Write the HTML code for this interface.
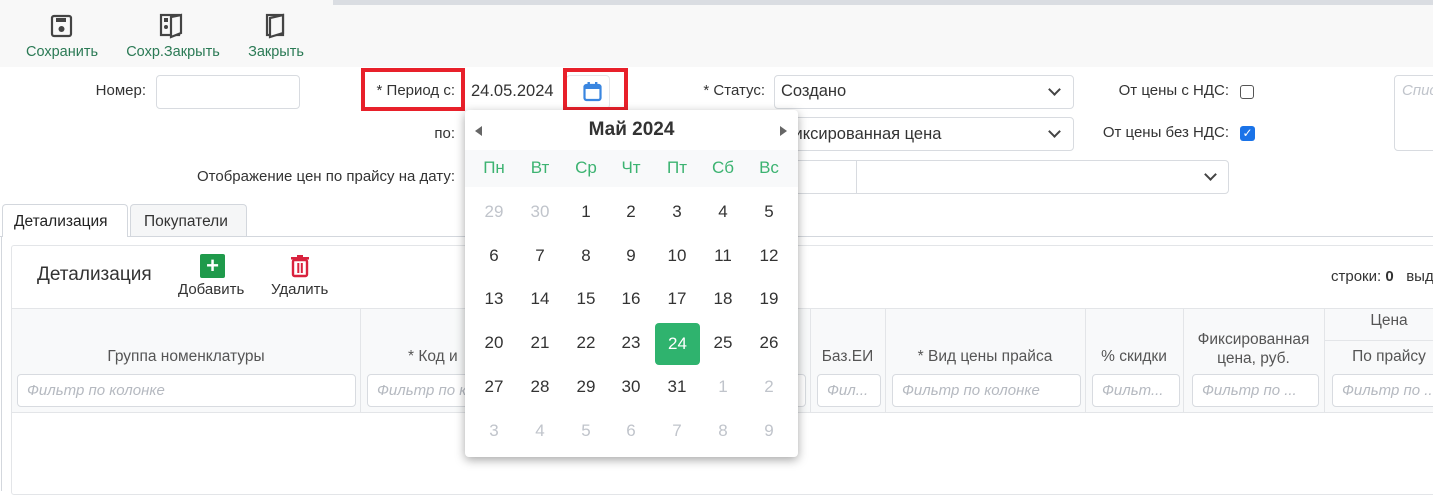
<!DOCTYPE html>
<html><head><meta charset="utf-8"><style>
*{box-sizing:border-box;margin:0;padding:0}
body{width:1433px;height:491px;overflow:hidden;background:#fff;font-family:"Liberation Sans","DejaVu Sans",sans-serif;color:#333;font-size:15px;position:relative}
.a{position:absolute}
.lbl{position:absolute;text-align:right;font-size:15px;color:#333;white-space:nowrap}
.inp{position:absolute;border:1px solid #d8dbe0;border-radius:4px;background:#fff}
.chev{position:absolute;width:9px;height:9px;border-right:2.5px solid #444;border-bottom:2.5px solid #444;transform:rotate(45deg)}
.tb{position:absolute;top:44px;font-size:14.5px;color:#2b7a55;text-align:center;white-space:nowrap}
.th{position:absolute;font-size:15.5px;color:#555;text-align:center;white-space:nowrap}
.flt{position:absolute;top:374px;height:33px;border:1px solid #d8dbe0;border-radius:4px;background:#fff;color:#b5b9c0;font-style:italic;font-size:15px;padding:7px 9px;white-space:nowrap;overflow:hidden}
.vl{position:absolute;top:308px;height:105px;width:1px;background:#e3e5e8}
.d{position:absolute;width:46px;text-align:center;font-size:17px;color:#333}
.m{color:#c0c4cb}
.red{position:absolute;border:4px solid #e8202a}
</style></head><body>
<div class="a" style="left:0;top:0;width:1433px;height:67px;background:#f8f8f8"></div>
<div class="a" style="left:333px;top:0;width:1100px;height:5px;background:#dadde2"></div>

<svg class="a" style="left:50px;top:14px" width="24" height="24" viewBox="0 0 24 24"><rect x="2" y="2" width="19" height="20" rx="2" fill="none" stroke="#444" stroke-width="2.2"/><rect x="6" y="4" width="10" height="4" fill="#444"/><circle cx="11.5" cy="15" r="3" fill="#444"/></svg>
<svg class="a" style="left:159px;top:13px" width="26" height="26" viewBox="0 0 26 26"><rect x="2" y="2" width="18" height="20" fill="none" stroke="#444" stroke-width="2.2"/><rect x="5" y="5" width="4" height="4" fill="#444"/><circle cx="7" cy="14" r="2" fill="#444"/><path d="M12 4 L22 2 L22 20 L12 24 Z" fill="#f8f8f8" stroke="#444" stroke-width="2.2"/></svg>
<svg class="a" style="left:265px;top:13px" width="22" height="26" viewBox="0 0 22 26"><rect x="2" y="2" width="16" height="20" fill="none" stroke="#444" stroke-width="2.2"/><path d="M5 5 L18 2 L18 20 L5 24 Z" fill="#f8f8f8" stroke="#444" stroke-width="2.2"/></svg>
<div class="tb" style="left:18px;width:88px">Сохранить</div>
<div class="tb" style="left:119px;width:108px">Сохр.Закрыть</div>
<div class="tb" style="left:240px;width:72px">Закрыть</div>

<div class="lbl" style="left:60px;width:86px;top:82px">Номер:</div>
<div class="inp" style="left:156px;top:75px;width:144px;height:34px"></div>
<div class="lbl" style="left:300px;width:155px;top:82px">* Период с:</div>
<div class="red" style="left:361px;top:68px;width:104px;height:43px"></div>
<div class="a" style="left:471px;top:82px;font-size:16.5px">24.05.2024</div>
<div class="inp" style="left:566px;top:75px;width:44px;height:34px;border-color:#e4e6ea"></div>
<svg class="a" style="left:583px;top:81px" width="19" height="21" viewBox="0 0 19 21"><rect x="1.5" y="4" width="16" height="15" rx="2" fill="none" stroke="#3a86e0" stroke-width="2.2"/><rect x="1.5" y="4" width="16" height="4" fill="#3a86e0"/><rect x="4.5" y="1" width="2.4" height="5" fill="#3a86e0"/><rect x="12" y="1" width="2.4" height="5" fill="#3a86e0"/></svg>
<div class="red" style="left:563px;top:68px;width:65px;height:43px"></div>
<div class="lbl" style="left:650px;width:115px;top:82px">* Статус:</div>
<div class="inp" style="left:774px;top:75px;width:300px;height:34px"></div>
<div class="a" style="left:781px;top:82px;font-size:16.5px">Создано</div>
<div class="chev" style="left:1050px;top:85px"></div>
<div class="lbl" style="left:1050px;width:179px;top:82px">От цены с НДС:</div>
<div class="a" style="left:1240px;top:85px;width:14px;height:14px;border:1.5px solid #555;border-radius:3px"></div>
<div class="inp" style="left:1394px;top:75px;width:60px;height:76px"></div>
<div class="a" style="left:1402px;top:82px;color:#c0c4cb;font-style:italic;font-size:15px">Спис</div>

<div class="lbl" style="left:400px;width:55px;top:125px">по:</div>
<div class="inp" style="left:774px;top:117px;width:300px;height:34px"></div>
<div class="a" style="left:781px;top:125px;font-size:16.5px">Фиксированная цена</div>
<div class="chev" style="left:1050px;top:127px"></div>
<div class="lbl" style="left:1050px;width:179px;top:124px">От цены без НДС:</div>
<div class="a" style="left:1240px;top:126px;width:15px;height:15px;background:#1a73e8;border-radius:3px;color:#fff;font-size:12px;line-height:15px;text-align:center">✓</div>

<div class="lbl" style="left:150px;width:305px;top:168px">Отображение цен по прайсу на дату:</div>
<div class="inp" style="left:600px;top:160px;width:629px;height:34px"></div>
<div class="a" style="left:856px;top:161px;width:1px;height:32px;background:#d8dbe0"></div>
<div class="chev" style="left:1206px;top:170px"></div>

<div class="a" style="left:0;top:236px;width:1433px;height:1px;background:#d3d7dd"></div>
<div class="a" style="left:2px;top:204px;width:126px;height:33px;border:1px solid #d3d7dd;border-bottom:none;border-radius:4px 4px 0 0;background:#fff"></div>
<div class="a" style="left:14px;top:213px;font-size:15.5px;color:#222">Детализация</div>
<div class="a" style="left:130px;top:204px;width:117px;height:32px;border:1px solid #d3d7dd;border-bottom:none;border-radius:4px 4px 0 0;background:#f5f6f7"></div>
<div class="a" style="left:144px;top:213px;font-size:15.5px;color:#333">Покупатели</div>
<div class="a" style="left:1px;top:237px;width:1px;height:254px;background:#d3d7dd"></div>

<div class="a" style="left:11px;top:245px;width:1430px;height:250px;border:1px solid #e3e5e8;border-radius:3px"></div>
<div class="a" style="left:37px;top:264px;font-size:19px;color:#333">Детализация</div>
<div class="a" style="left:200px;top:254px;width:25px;height:24px;background:#1f9a4b;border-radius:2px;color:#fff;font-size:22px;line-height:23px;text-align:center;font-weight:bold">+</div>
<div class="a" style="left:178px;top:281px;font-size:15px">Добавить</div>
<svg class="a" style="left:289px;top:254px" width="22" height="24" viewBox="0 0 22 24"><rect x="2" y="3" width="18" height="2.5" fill="#d9223e"/><rect x="8" y="1" width="6" height="3" fill="#d9223e"/><rect x="4" y="6" width="14" height="16" rx="1.5" fill="none" stroke="#d9223e" stroke-width="2.4"/><rect x="8.3" y="9" width="2" height="10" fill="#d9223e"/><rect x="11.8" y="9" width="2" height="10" fill="#d9223e"/></svg>
<div class="a" style="left:271px;top:281px;font-size:15px">Удалить</div>
<div class="a" style="left:1331px;top:268px;font-size:15px;white-space:nowrap">строки: <b>0</b>&nbsp;&nbsp; выд</div>

<div class="a" style="left:12px;top:308px;width:1421px;height:105px;background:#f8f9fa;border-top:1px solid #e3e5e8;border-bottom:1px solid #e3e5e8"></div>
<div class="vl" style="left:360px"></div><div class="vl" style="left:810px"></div><div class="vl" style="left:885px"></div><div class="vl" style="left:1085px"></div><div class="vl" style="left:1183px"></div><div class="vl" style="left:1324px"></div>
<div class="a" style="left:1324px;top:340px;width:109px;height:1px;background:#e3e5e8"></div>
<div class="th" style="left:12px;width:348px;top:348px">Группа номенклатуры</div>
<div class="th" style="left:360px;width:210px;top:348px;text-align:left;padding-left:48px">* Код и</div>
<div class="th" style="left:810px;width:75px;top:348px">Баз.ЕИ</div>
<div class="th" style="left:885px;width:200px;top:348px">* Вид цены прайса</div>
<div class="th" style="left:1085px;width:98px;top:348px">% скидки</div>
<div class="th" style="left:1183px;width:141px;top:330px;line-height:19px">Фиксированная<br>цена, руб.</div>
<div class="th" style="left:1324px;width:130px;top:312px">Цена</div>
<div class="th" style="left:1324px;width:130px;top:348px">По прайсу</div>
<div class="flt" style="left:17px;width:339px">Фильтр по колонке</div>
<div class="flt" style="left:367px;width:439px">Фильтр по колонке</div>
<div class="flt" style="left:817px;width:64px">Фил...</div>
<div class="flt" style="left:892px;width:189px">Фильтр по колонке</div>
<div class="flt" style="left:1092px;width:88px">Фильт...</div>
<div class="flt" style="left:1192px;width:127px">Фильтр по ...</div>
<div class="flt" style="left:1332px;width:120px">Фильтр по ...</div>

<div class="a" style="left:465px;top:110px;width:333px;height:347px;background:#fff;border-radius:4px;box-shadow:0 3px 10px rgba(0,0,0,.35)">
<div class="a" style="left:10px;top:16px;width:0;height:0;border-top:5px solid transparent;border-bottom:5px solid transparent;border-right:7px solid #666"></div>
<div class="a" style="left:315px;top:16px;width:0;height:0;border-top:5px solid transparent;border-bottom:5px solid transparent;border-left:7px solid #666"></div>
<div class="a" style="left:0;top:9px;width:333px;text-align:center;font-size:19px;font-weight:bold;color:#333">Май 2024</div>
<div class="a" style="left:0;top:40px;width:333px;height:37px;background:#f8f9fa"></div>
</div>
<div id="cal"></div>
<script>
var h='',days=['Пн','Вт','Ср','Чт','Пт','Сб','Вс'],xs=[471,517,563,608,654,700,746];
days.forEach((d,i)=>h+='<div class="d" style="left:'+xs[i]+'px;top:158px;color:#3cb371;font-size:17px">'+d+'</div>');
var rows=[[29,30,1,2,3,4,5],[6,7,8,9,10,11,12],[13,14,15,16,17,18,19],[20,21,22,23,24,25,26],[27,28,29,30,31,1,2],[3,4,5,6,7,8,9]],ys=[202,246,289,333,377,421];
rows.forEach((r,ri)=>r.forEach((n,i)=>{var m=(ri==0&&n>20)||(ri>=4&&n<15);
if(ri==3&&n==24)h+='<div class="a" style="left:655px;top:323px;width:45px;height:42px;background:#2fb36e;border-radius:4px;color:#fff;font-size:17px;text-align:center;line-height:42px">24</div>';
else h+='<div class="d'+(m?' m':'')+'" style="left:'+xs[i]+'px;top:'+ys[ri]+'px">'+n+'</div>';}));
document.getElementById('cal').innerHTML=h;
</script>
</body></html>
